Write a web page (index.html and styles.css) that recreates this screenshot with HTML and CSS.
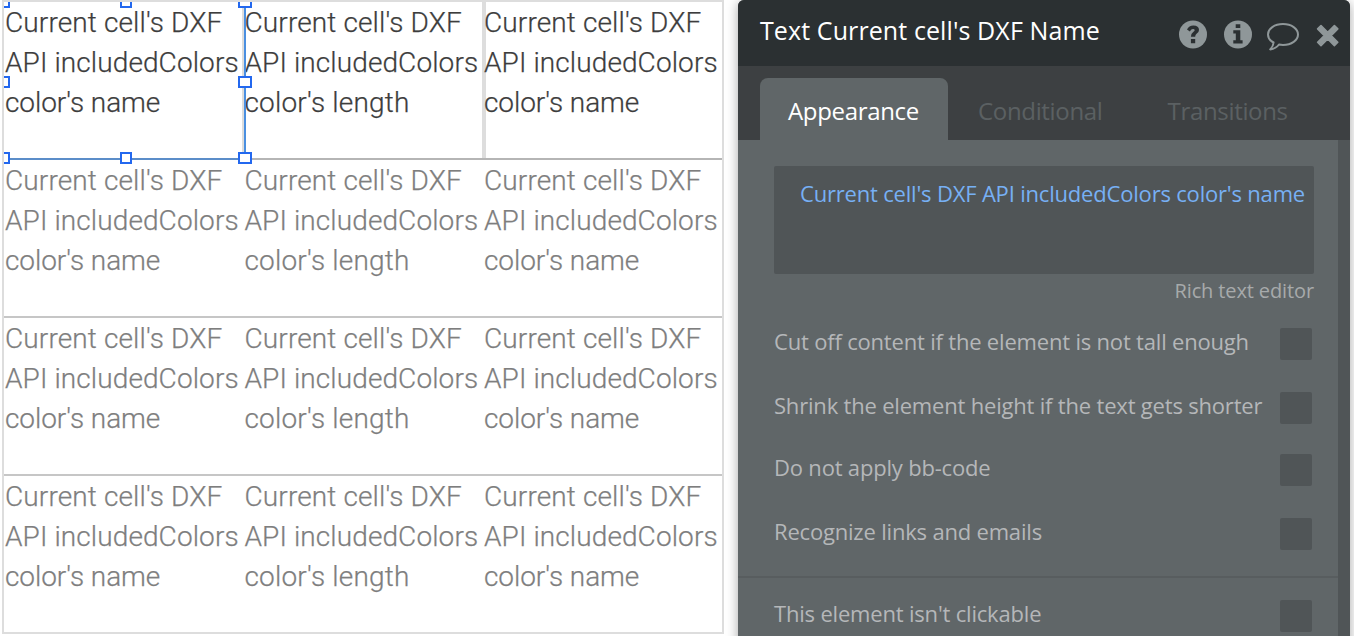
FILE: index.html
```html
<!DOCTYPE html>
<html lang="en">
<head>
<meta charset="utf-8">
<title>Property editor</title>
<link rel="stylesheet" href="styles.css">
</head>
<body>
<main class="workspace">
  <section class="grid">
    <div class="row first">
      <div class="cell"><span class="l1">Current cell's DXF</span><span class="l2">API includedColors</span><span class="l3">color's name</span></div>
      <div class="cell"><span class="l1">Current cell's DXF</span><span class="l2">API includedColors</span><span class="l4">color's length</span></div>
      <div class="cell"><span class="l1">Current cell's DXF</span><span class="l2">API includedColors</span><span class="l3">color's name</span></div>
      <div class="selection">
        <i class="handle nw"></i><i class="handle n"></i><i class="handle ne"></i>
        <i class="handle w"></i><i class="handle e"></i>
        <i class="handle sw"></i><i class="handle s"></i><i class="handle se"></i>
      </div>
    </div>
    <div class="row">
      <div class="cell"><span class="l1">Current cell's DXF</span><span class="l2">API includedColors</span><span class="l3">color's name</span></div>
      <div class="cell"><span class="l1">Current cell's DXF</span><span class="l2">API includedColors</span><span class="l4">color's length</span></div>
      <div class="cell"><span class="l1">Current cell's DXF</span><span class="l2">API includedColors</span><span class="l3">color's name</span></div>
    </div>
    <div class="row">
      <div class="cell"><span class="l1">Current cell's DXF</span><span class="l2">API includedColors</span><span class="l3">color's name</span></div>
      <div class="cell"><span class="l1">Current cell's DXF</span><span class="l2">API includedColors</span><span class="l4">color's length</span></div>
      <div class="cell"><span class="l1">Current cell's DXF</span><span class="l2">API includedColors</span><span class="l3">color's name</span></div>
    </div>
    <div class="row">
      <div class="cell"><span class="l1">Current cell's DXF</span><span class="l2">API includedColors</span><span class="l3">color's name</span></div>
      <div class="cell"><span class="l1">Current cell's DXF</span><span class="l2">API includedColors</span><span class="l4">color's length</span></div>
      <div class="cell"><span class="l1">Current cell's DXF</span><span class="l2">API includedColors</span><span class="l3">color's name</span></div>
    </div>
  </section>
  <aside class="panel">
    <header class="header">
      <h1 class="title">Text Current cell's DXF Name</h1>
      <svg class="icons" width="162" height="34" viewBox="0 0 162 34">
        <circle cx="15" cy="16.5" r="14"/>
        <path class="cut" d="M9 11.5Q11 7.4 15.3 7.4Q21 7.4 21 12Q21 14.4 18.6 15.8Q17.2 16.6 17.2 18.8H12.9Q12.9 15.2 15.2 13.9Q16.7 13.2 16.7 12.3Q16.7 11 15 11Q13.3 11 11.8 13.4ZM12.9 21h4.3v4.3h-4.3z"/>
        <circle cx="60" cy="16.5" r="14"/>
        <path class="cut" d="M57.7 6.2h4.6v3.8h-4.6zM55.3 12.2h7v10h2.3v3.3h-9.3v-3.3h2.5v-6.7h-2.5z"/>
        <path class="bubble" d="M105 6.1C96.500 6.100 90 10.700 90 16.400C90 19.700 92.100 22.700 95.600 24.500C95.300 27.600 94 29.600 92.200 31.400C96.200 30.900 99.200 29 101 26.500Q103 26.900 105 26.900C113.500 26.900 120 22.200 120 16.500C120 10.700 113.500 6.100 105 6.100Z"/>
        <path class="cross" d="M143 7.500L149.700 14.200L156.400 7.500L159.800 10.900L153.100 17.600L159.800 24.300L156.400 27.700L149.700 21L143 27.700L139.600 24.300L146.300 17.600L139.600 10.900Z"/>
      </svg>
    </header>
    <nav class="tabs">
      <span class="tab active">Appearance</span>
      <span class="tab">Conditional</span>
      <span class="tab last">Transitions</span>
    </nav>
    <div class="body">
      <div class="expression">Current cell's DXF API includedColors color's name</div>
      <div class="editor-link">Rich text editor</div>
      <div class="option o1"><span>Cut off content if the element is not tall enough</span><i class="box"></i></div>
      <div class="option o2"><span>Shrink the element height if the text gets shorter</span><i class="box"></i></div>
      <div class="option o3"><span>Do not apply bb-code</span><i class="box"></i></div>
      <div class="option o4"><span>Recognize links and emails</span><i class="box"></i></div>
      <div class="separator"></div>
      <div class="option o5"><span>This element isn't clickable</span><i class="box"></i></div>
    </div>
  </aside>
</main>
</body>
</html>
```
FILE: styles.css
```css
* { box-sizing: border-box; }
body { margin: 0; background: #fff; overflow: hidden; }
.workspace { display: flex; align-items: flex-start; width: 1354px; height: 636px; overflow: hidden; }

.grid {
  flex: none;
  width: 722px;
  height: 634px;
  margin-left: 2px;
  border: 2px solid #ddd;
  font: 300 28px/40px Roboto, sans-serif;
  color: #7e7e7e;
  -webkit-text-stroke: 0.25px currentColor;
}
.row { position: relative; display: grid; grid-template-columns: 240px 240px 238px; height: 158px; border-bottom: 2px solid #c6c6c6; }
.row:first-child { color: #3d3d3d; border-bottom-color: #b5b5b5; }
.row:last-child { border-bottom: 0; }
.cell { padding: 1px 0 0 1px; }
.cell + .cell { padding-left: 0.5px; }
.cell + .cell + .cell { padding-left: 0; }
.cell span { display: block; white-space: nowrap; width: max-content; }
.l1 { letter-spacing: 0.13px; }
.l2 { letter-spacing: 0.1px; }
.l3 { letter-spacing: -0.08px; }
.l4 { letter-spacing: 0.17px; }
.first .cell + .cell { box-shadow: -2px 0 0 #ddd, inset 2px 0 0 #ddd; }

.selection { position: absolute; left: 0; top: -2px; width: 242px; height: 160px; border: solid #4a8fe0; border-width: 0 2px 2px 0; border-bottom-color: #5b8dc9; clip-path: inset(2px -8px -8px 0); }
.handle { position: absolute; width: 12px; height: 12px; background: #fff; border: 2px solid #2368ef; }
.nw, .n, .ne { top: -4px; }
.w, .e { top: 76px; }
.sw, .s, .se { top: 152px; }
.nw, .w, .sw { left: -6px; }
.n, .s { left: 116px; }
.ne, .e, .se { left: 234px; width: 14px; }

.panel {
  flex: none;
  width: 612px;
  height: 660px;
  margin-left: 14px;
  border-radius: 6px 6px 0 0;
  overflow: hidden;
  background: #606668;
  box-shadow: 0 2px 12px rgba(0, 0, 0, 0.35);
  font-family: "Open Sans", sans-serif;
}
.header { display: flex; justify-content: space-between; height: 66px; padding: 0 10px 0 22px; background: #2b3032; }
.title { margin: 0; font-size: 25px; line-height: 60px; font-weight: 400; letter-spacing: 0.1px; color: #fff; white-space: nowrap; }
.icons { margin-top: 18px; fill: #8f9799; }
.icons .cut { fill: #2b3032; }
.bubble { fill: none; stroke: #8f9799; stroke-width: 2; stroke-linejoin: round; }
.cross { stroke: #8f9799; stroke-width: 1.6; stroke-linejoin: round; }
.tabs { display: flex; height: 74px; padding: 12px 0 0 22px; background: #3d4042; }
.tab { padding-left: 30px; line-height: 66px; font-size: 24px; letter-spacing: -0.33px; color: #5b6062; white-space: nowrap; }
.tab.active { width: 188px; padding-left: 28px; border-radius: 8px 8px 0 0; background: #606668; color: #fff; }
.tab.last { padding-left: 65px; }
.body { height: 520px; padding: 26px 24px 0 36px; border-right: 12px solid #505557; font-size: 22px; letter-spacing: -0.19px; color: #b5b7b9; }
.expression { height: 108px; padding-left: 26px; border-radius: 2px; background: #505557; color: #77b0f4; line-height: 55px; white-space: nowrap; }
.editor-link { height: 34px; line-height: 34px; text-align: right; font-size: 20px; letter-spacing: -0.12px; color: #a7aaab; }
.option { display: flex; justify-content: space-between; align-items: flex-start; height: 32px; padding-right: 2px; line-height: 27px; white-space: nowrap; }
.box { width: 32px; height: 32px; border-radius: 2px; background: #505557; }
.o1 { margin-top: 20px; }
.o2 { margin-top: 32px; }
.o3 { margin-top: 30px; }
.o4 { margin-top: 32px; }
.separator { height: 2px; margin: 26px -24px 22px -36px; background: #585d5f; }
```
